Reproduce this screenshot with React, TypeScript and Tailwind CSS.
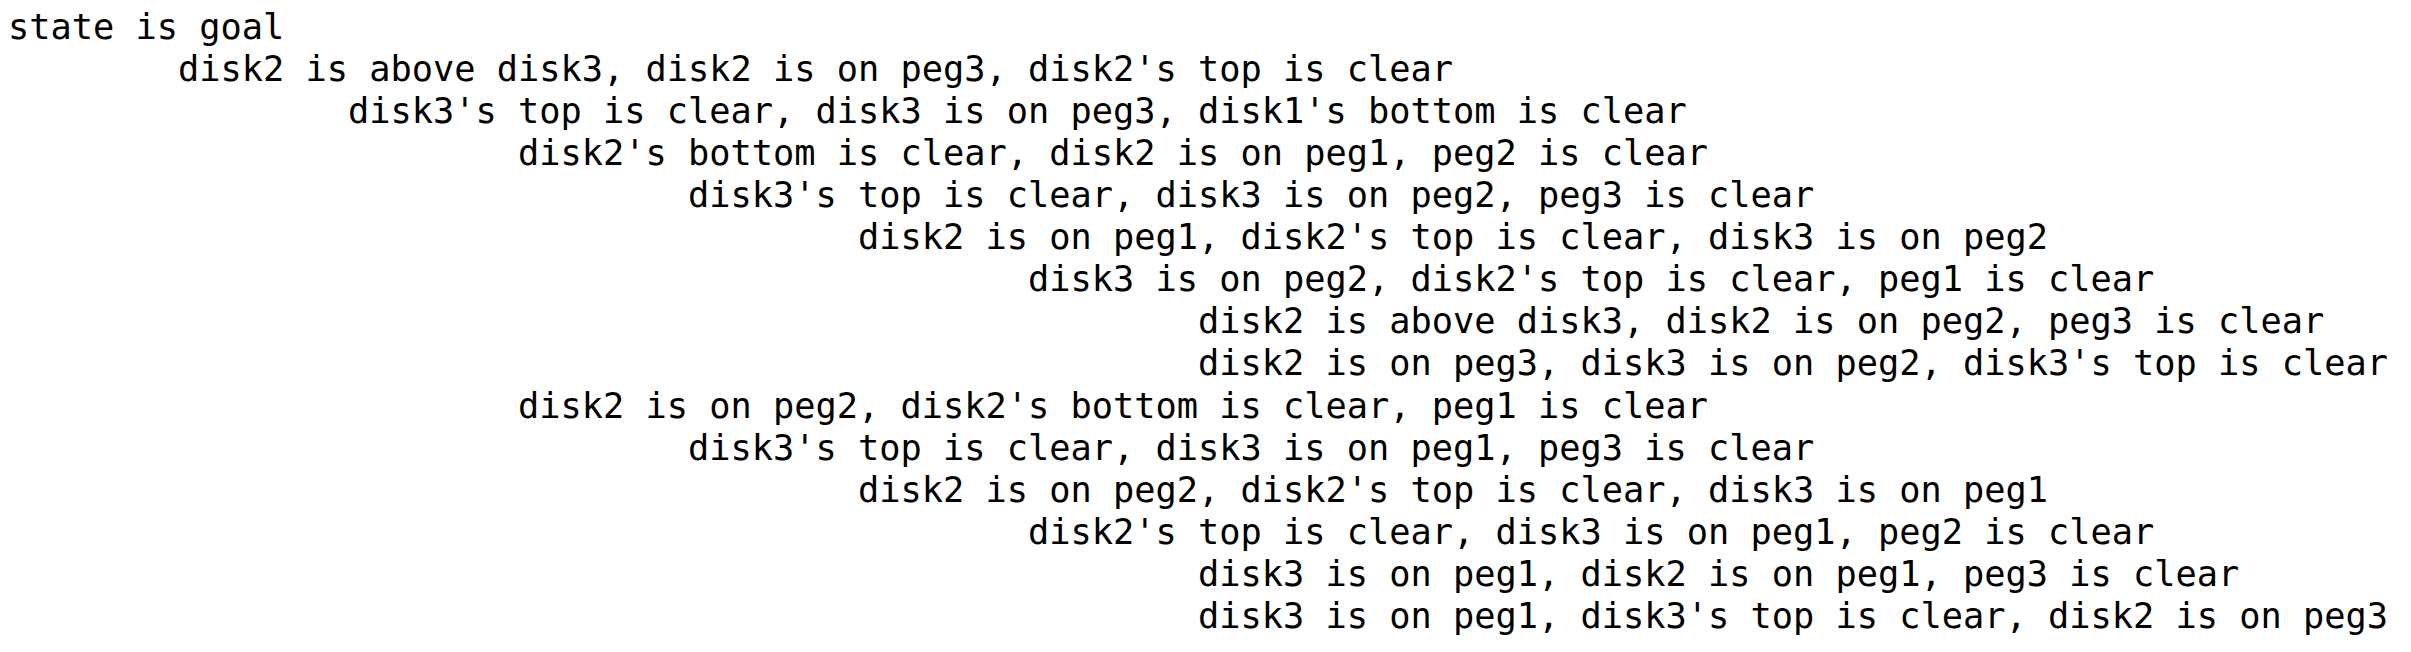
const lines: [number, string][] = [
  [0, "state is goal"],
  [1, "disk2 is above disk3, disk2 is on peg3, disk2's top is clear"],
  [2, "disk3's top is clear, disk3 is on peg3, disk1's bottom is clear"],
  [3, "disk2's bottom is clear, disk2 is on peg1, peg2 is clear"],
  [4, "disk3's top is clear, disk3 is on peg2, peg3 is clear"],
  [5, "disk2 is on peg1, disk2's top is clear, disk3 is on peg2"],
  [6, "disk3 is on peg2, disk2's top is clear, peg1 is clear"],
  [7, "disk2 is above disk3, disk2 is on peg2, peg3 is clear"],
  [7, "disk2 is on peg3, disk3 is on peg2, disk3's top is clear"],
  [3, "disk2 is on peg2, disk2's bottom is clear, peg1 is clear"],
  [4, "disk3's top is clear, disk3 is on peg1, peg3 is clear"],
  [5, "disk2 is on peg2, disk2's top is clear, disk3 is on peg1"],
  [6, "disk2's top is clear, disk3 is on peg1, peg2 is clear"],
  [7, "disk3 is on peg1, disk2 is on peg1, peg3 is clear"],
  [7, "disk3 is on peg1, disk3's top is clear, disk2 is on peg3"],
]

export default function App() {
  return (
    <div className="min-h-screen bg-white text-black">
      <pre className="m-0 pt-[5.7px] pl-[8px] font-['DejaVu_Sans_Mono',monospace] text-[35.3px] leading-[42.1px] whitespace-pre [tab-size:8]">
        {lines.map(([depth, text], i) => (
          <div key={i}>{"\t".repeat(depth) + text}</div>
        ))}
      </pre>
    </div>
  )
}
